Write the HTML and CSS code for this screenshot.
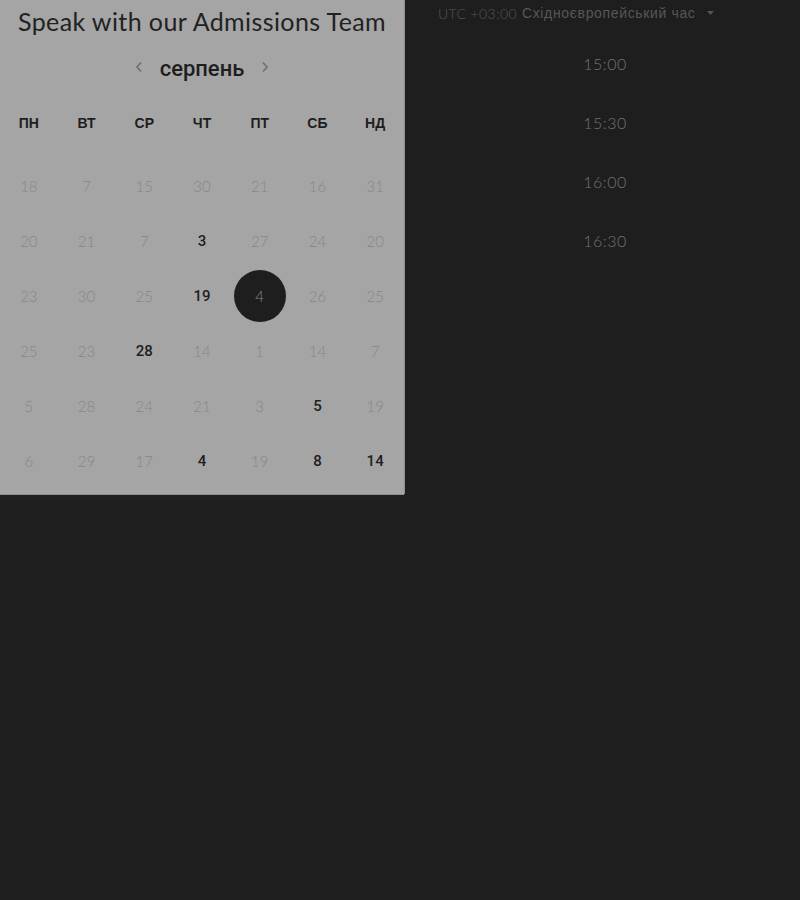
FILE: index.html
```html
<!DOCTYPE html>
<html lang="uk">
<head>
<meta charset="utf-8">
<link rel="stylesheet" href="styles.css">
</head>
<body>
<div class="page">
  <section class="calendar">
    <h1 class="title">Speak with our Admissions Team</h1>
    <div class="month-nav">
      <svg class="chev" width="8" height="12" viewBox="0 0 8 12"><path d="M6 1.5 L2 6 L6 10.5" fill="none" stroke="#6f6f6f" stroke-width="1.6"/></svg>
      <span class="month">серпень</span>
      <svg class="chev" width="8" height="12" viewBox="0 0 8 12"><path d="M2 1.5 L6 6 L2 10.5" fill="none" stroke="#6f6f6f" stroke-width="1.6"/></svg>
    </div>
    <div class="weekdays">
      <span>ПН</span><span>ВТ</span><span>СР</span><span>ЧТ</span><span>ПТ</span><span>СБ</span><span>НД</span>
    </div>
    <div class="days">
      <span class="d">18</span><span class="d">7</span><span class="d">15</span><span class="d">30</span><span class="d">21</span><span class="d">16</span><span class="d">31</span>
      <span class="d">20</span><span class="d">21</span><span class="d">7</span><span class="d on">3</span><span class="d">27</span><span class="d">24</span><span class="d">20</span>
      <span class="d">23</span><span class="d">30</span><span class="d">25</span><span class="d on">19</span><span class="d sel"><span class="circle">4</span></span><span class="d">26</span><span class="d">25</span>
      <span class="d">25</span><span class="d">23</span><span class="d on">28</span><span class="d">14</span><span class="d">1</span><span class="d">14</span><span class="d">7</span>
      <span class="d">5</span><span class="d">28</span><span class="d">24</span><span class="d">21</span><span class="d">3</span><span class="d on">5</span><span class="d">19</span>
      <span class="d">6</span><span class="d">29</span><span class="d">17</span><span class="d on">4</span><span class="d">19</span><span class="d on">8</span><span class="d on">14</span>
    </div>
  </section>
  <section class="slots">
    <div class="tz">
      <span class="utc">UTC +03:00</span>
      <span class="zone">Східноєвропейський час</span>
      <svg class="caret" width="7" height="4" viewBox="0 0 7 4"><path d="M0 0 H7 L3.5 4 Z" fill="#555"/></svg>
    </div>
    <ul class="times">
      <li>15:00</li>
      <li>15:30</li>
      <li>16:00</li>
      <li>16:30</li>
    </ul>
  </section>
</div>
</body>
</html>
```
FILE: styles.css
```css
html, body {
  margin: 0;
  padding: 0;
  background: #1e1e1e;
}
body {
  width: 800px;
  height: 900px;
  overflow: hidden;
  font-family: "Liberation Sans", Arial, sans-serif;
}
.page {
  display: flex;
  align-items: flex-start;
}
.calendar {
  width: 404px;
  flex: none;
  background: #a5a5a5;
  padding-bottom: 6px;
  box-shadow: 1px 0 0 #8e8e8e, 0 1px 0 #8e8e8e;
}
.title {
  margin: 0;
  height: 42px;
  line-height: 42px;
  text-align: center;
  font-family: "Lato", "Noto Sans", sans-serif;
  font-weight: 400;
  font-size: 25px;
  color: #222;
  letter-spacing: 0.4px;
}
.month-nav {
  height: 50px;
  display: flex;
  align-items: center;
  justify-content: center;
  gap: 17px;
}
.month {
  font-family: "Roboto", "Liberation Sans", sans-serif;
  font-size: 22px;
  font-weight: 500;
  color: #1e1e1e;
  position: relative;
  top: 1px;
}
.chev { display: block; }
.weekdays {
  margin-top: 11px;
  height: 40px;
  display: grid;
  grid-template-columns: repeat(7, 1fr);
  align-items: center;
  text-align: center;
  font-size: 14px;
  font-weight: 700;
  color: #1e1e1e;
}
.days {
  margin-top: 15px;
  display: grid;
  grid-template-columns: repeat(7, 1fr);
  grid-auto-rows: 55px;
}
.d {
  display: flex;
  align-items: center;
  justify-content: center;
  font-family: "Lato", sans-serif;
  font-weight: 300;
  font-size: 15px;
  color: #878787;
}
.d.on {
  font-family: "Roboto", "Liberation Sans", sans-serif;
  font-weight: 500;
  color: #1e1e1e;
}
.circle {
  width: 52px;
  height: 52px;
  border-radius: 50%;
  background: #1e1e1e;
  color: #8c8c8c;
  display: flex;
  align-items: center;
  justify-content: center;
}
.slots {
  flex: 1;
  padding-left: 34px;
}
.tz {
  height: 26px;
  display: flex;
  align-items: center;
  gap: 5px;
  font-size: 14px;
  color: #575757;
}
.utc {
  font-family: "Lato", sans-serif;
  font-weight: 300;
  font-size: 14px;
  letter-spacing: 0.4px;
  color: #555;
}
.zone { letter-spacing: 0.65px; }
.caret { margin-left: 6px; }
.times {
  list-style: none;
  margin: 8px 0 0 -34px;
  padding: 0;
}
.times li {
  height: 59px;
  line-height: 59px;
  text-align: center;
  padding-left: 6px;
  font-family: "Lato", sans-serif;
  font-weight: 300;
  font-size: 16px;
  letter-spacing: 0.5px;
  color: #727272;
}
```
